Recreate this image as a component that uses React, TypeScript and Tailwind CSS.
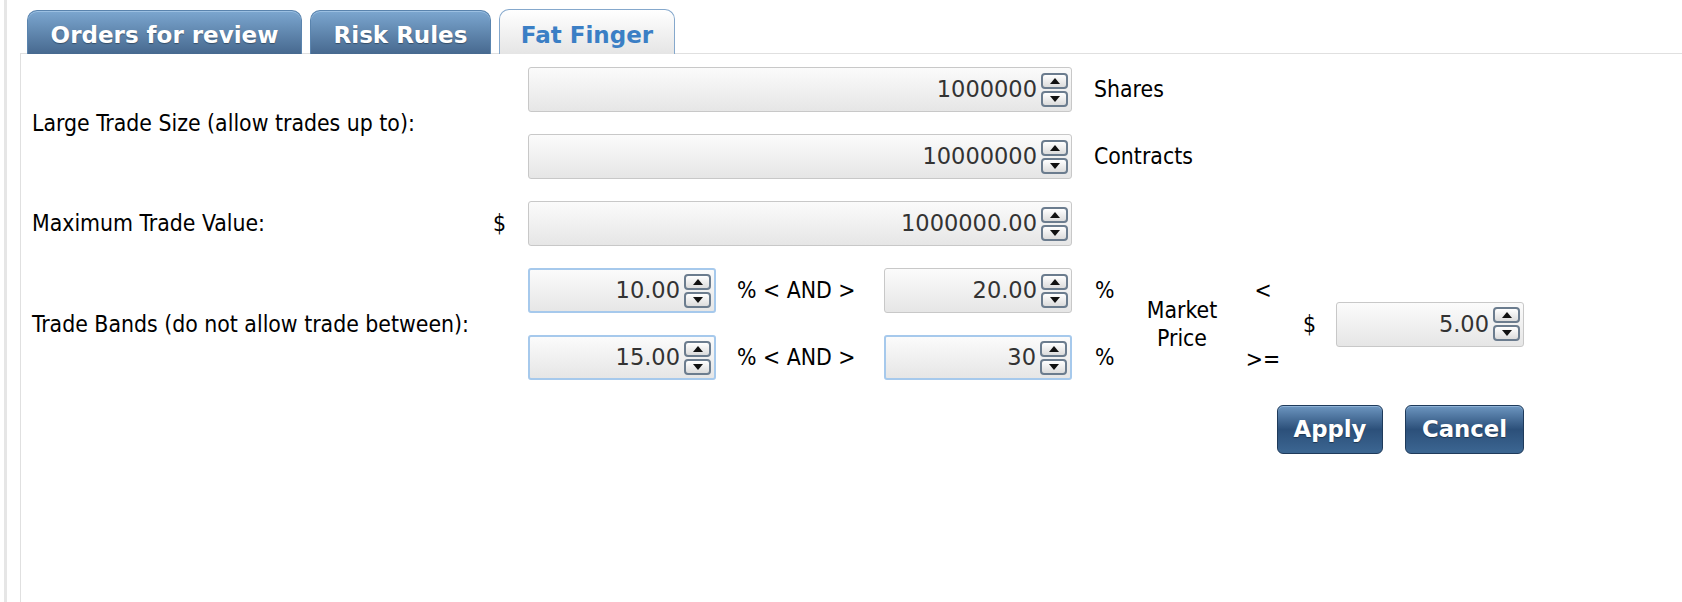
import React from 'react'

const label = "font-['DejaVu_Sans_Condensed','Liberation_Sans',sans-serif] text-[22.8px] text-black"

function Arrow({ up }: { up?: boolean }) {
  return (
    <svg width="10" height="6" viewBox="0 0 10 6">
      {up ? <polygon points="5,0 10,6 0,6" fill="#111" /> : <polygon points="0,0 10,0 5,6" fill="#111" />}
    </svg>
  )
}

function Spin({ value, className, focus }: { value: string; className: string; focus?: boolean }) {
  return (
    <div
      className={`${className} flex h-[45px] shrink-0 items-center justify-end rounded-[3px] pr-[3px] bg-gradient-to-b from-[#fbfbfb] to-[#e6e6e6] ${
        focus ? 'border-2 border-[#a6c9ec]' : 'border border-[#c8c8c8]'
      }`}
    >
      <span className="font-['DejaVu_Sans',sans-serif] text-[22.5px] text-[#333] leading-none mr-[4px]">{value}</span>
      <div className="flex flex-col gap-[2px]">
        <div className="flex h-[16px] w-[27px] items-center justify-center rounded-[4px] border-2 border-[#6b7c8e] bg-gradient-to-b from-white to-[#dcdcdc]">
          <Arrow up />
        </div>
        <div className="flex h-[16px] w-[27px] items-center justify-center rounded-[4px] border-2 border-[#6b7c8e] bg-gradient-to-b from-white to-[#dcdcdc]">
          <Arrow />
        </div>
      </div>
    </div>
  )
}

const tabBase =
  "flex h-[44px] items-center justify-center rounded-t-[10px] pt-[6px] font-['DejaVu_Sans',sans-serif] font-bold text-[23px]"
const tabIdle =
  'border border-b-0 border-[#5a84ae] bg-gradient-to-b from-[#7ca7d0] to-[#47698f] text-white shadow-[inset_0_1px_0_#9cc0e2] [text-shadow:0_1px_1px_rgba(0,0,0,0.35)]'

const btn =
  "flex h-[49px] items-center justify-center rounded-[6px] border border-[#1f3b5b] bg-gradient-to-b from-[#6d96c0] via-[#2c507a] to-[#3c6692] font-['DejaVu_Sans',sans-serif] font-bold text-[22.8px] text-white shadow-[inset_0_-3px_0_#3b6590,inset_0_1px_0_#8fb2d6] [text-shadow:0_1px_1px_rgba(0,0,0,0.4)]"

export default function App() {
  return (
    <div className="flex h-screen bg-white">
      <div className="ml-[4px] w-[3px] bg-[#e6e6e6]" />
      <div className="ml-[13px] flex flex-1 flex-col">
        <div className="relative z-10 flex items-end gap-[8px] pl-[7px] pt-[9px] -mb-px">
          <div className={`${tabBase} ${tabIdle} w-[275px]`}>Orders for review</div>
          <div className={`${tabBase} ${tabIdle} w-[181px]`}>Risk Rules</div>
          <div className={`${tabBase} w-[176px] h-[45px] border border-b-0 border-[#85a8cc] bg-gradient-to-b from-white to-[#e5e5e5] text-[#3b7fc5]`}>
            Fat Finger
          </div>
        </div>
        <div className="flex-1 border-l border-t border-[#e0e0e0] pl-[11px] pt-[13px]">
          {/* Large trade size */}
          <div className="flex items-center">
            <div className={`${label} w-[496px]`}>Large Trade Size (allow trades up to):</div>
            <div className="flex flex-col gap-[22px]">
              <div className="flex items-center">
                <Spin value="1000000" className="w-[544px]" />
                <span className={`${label} ml-[22px]`}>Shares</span>
              </div>
              <div className="flex items-center">
                <Spin value="10000000" className="w-[544px]" />
                <span className={`${label} ml-[22px]`}>Contracts</span>
              </div>
            </div>
          </div>

          {/* Max trade value */}
          <div className="mt-[22px] flex items-center">
            <div className={`${label} w-[461px]`}>Maximum Trade Value:</div>
            <div className={`${label} w-[35px]`}>$</div>
            <Spin value="1000000.00" className="w-[544px]" />
          </div>

          {/* Trade bands */}
          <div className="mt-[22px] flex items-center">
            <div className={`${label} w-[496px]`}>Trade Bands (do not allow trade between):</div>
            <div className="flex flex-col gap-[22px]">
              <div className="flex items-center">
                <Spin value="10.00" className="w-[188px]" focus />
                <span className={`${label} w-[168px] pl-[21px]`}>% &lt; AND &gt;</span>
                <Spin value="20.00" className="w-[188px]" />
                <span className={`${label} w-[52px] pl-[23px]`}>%</span>
              </div>
              <div className="flex items-center">
                <Spin value="15.00" className="w-[188px]" focus />
                <span className={`${label} w-[168px] pl-[21px]`}>% &lt; AND &gt;</span>
                <Spin value="30" className="w-[188px]" focus />
                <span className={`${label} w-[52px] pl-[23px]`}>%</span>
              </div>
            </div>
            <div className={`${label} w-[116px] text-center leading-[28px]`}>
              Market
              <br />
              Price
            </div>
            <div className="flex w-[46px] flex-col gap-[22px]">
              <div className={`${label} flex h-[45px] items-center justify-center`}>&lt;</div>
              <div className={`${label} flex h-[45px] items-center justify-center pt-[4px]`}>&gt;=</div>
            </div>
            <div className={`${label} w-[50px] pl-[17px]`}>$</div>
            <Spin value="5.00" className="w-[188px]" />
          </div>

          {/* Actions */}
          <div className="mt-[25px] flex w-[1492px] justify-end gap-[22px]">
            <div className={`${btn} w-[106px]`}>Apply</div>
            <div className={`${btn} w-[119px]`}>Cancel</div>
          </div>
        </div>
      </div>
    </div>
  )
}
